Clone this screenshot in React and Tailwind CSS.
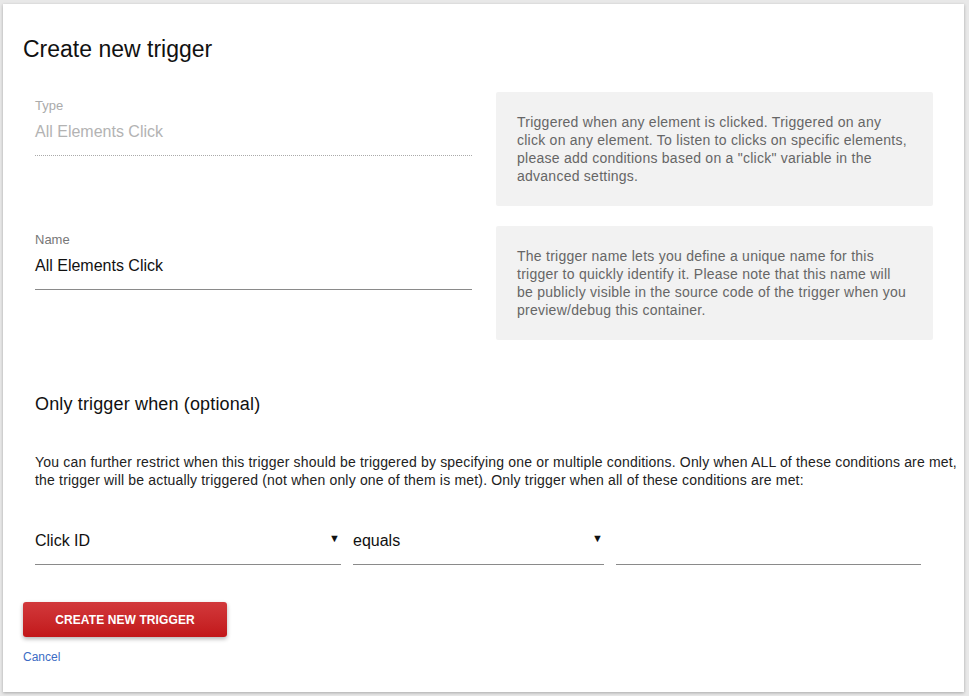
export default function App() {
  const font = { fontFamily: '"Liberation Sans", Arial, sans-serif' };
  return (
    <div className="min-h-screen w-full bg-[#e8e8e8] pt-[4px] pl-[3px]" style={font}>
      <div className="w-[961px] h-[688px] bg-white shadow-[0_1px_3px_rgba(0,0,0,0.28)] pt-[31px] pl-[20px]">
        <h1 className="text-[23px] leading-[28px] text-[#111]">Create new trigger</h1>

        <div className="ml-[12px] w-[898px] mt-[29px] flex flex-col gap-[20px]">
          <div className="grid grid-cols-[437px_437px] gap-[24px]">
            <div className="pt-[6px]">
              <div className="text-[13px] leading-[16px] text-[#ababab]">Type</div>
              <div className="mt-[8px] text-[16px] leading-[20px] text-[#b3b3b3]">All Elements Click</div>
              <div className="mt-[13px] border-b border-dotted border-[#aaaaaa]"></div>
            </div>
            <div className="bg-[#f2f2f2] rounded-[2px] px-[21px] py-[21px] text-[14px] leading-[18px] tracking-[0.25px] text-[#666] h-[114px] whitespace-nowrap">
              Triggered when any element is clicked. Triggered on any<br />
              click on any element. To listen to clicks on specific elements,<br />
              please add conditions based on a "click" variable in the<br />
              advanced settings.
            </div>
          </div>

          <div className="grid grid-cols-[437px_437px] gap-[24px]">
            <div className="pt-[6px]">
              <div className="text-[13px] leading-[16px] text-[#777]">Name</div>
              <div className="mt-[8px] text-[16px] leading-[20px] text-[#111]">All Elements Click</div>
              <div className="mt-[13px] border-b border-[#8a8a8a]"></div>
            </div>
            <div className="bg-[#f2f2f2] rounded-[2px] px-[21px] py-[21px] text-[14px] leading-[18px] tracking-[0.25px] text-[#666] h-[114px] whitespace-nowrap">
              The trigger name lets you define a unique name for this<br />
              trigger to quickly identify it. Please note that this name will<br />
              be publicly visible in the source code of the trigger when you<br />
              preview/debug this container.
            </div>
          </div>
        </div>

        <div className="ml-[12px]">
          <h2 className="mt-[53px] text-[18px] leading-[22px] tracking-[0.15px] text-[#111]">Only trigger when (optional)</h2>
          <p className="mt-[38px] text-[14px] leading-[18px] tracking-[0.18px] text-[#222] whitespace-nowrap">
            You can further restrict when this trigger should be triggered by specifying one or multiple conditions. Only when ALL of these conditions are met,<br />
            the trigger will be actually triggered (not when only one of them is met). Only trigger when all of these conditions are met:
          </p>

          <div className="mt-[42px] flex gap-[12px]">
            <div className="w-[306px] border-b border-[#8a8a8a] pb-[13px] flex items-start justify-between">
              <span className="text-[16px] leading-[20px] text-[#111]">Click ID</span>
              <span className="text-[11px] leading-[14px] text-[#111] mr-[1px]">▼</span>
            </div>
            <div className="w-[251px] border-b border-[#8a8a8a] pb-[13px] flex items-start justify-between">
              <span className="text-[16px] leading-[20px] text-[#111]">equals</span>
              <span className="text-[11px] leading-[14px] text-[#111] mr-[1px]">▼</span>
            </div>
            <div className="w-[305px] border-b border-[#8a8a8a] pb-[13px] h-[34px]"></div>
          </div>
        </div>

        <button className="mt-[37px] w-[204px] h-[35px] rounded-[3px] bg-gradient-to-b from-[#d2383b] to-[#c21619] text-white text-[12px] font-bold tracking-[0.1px] shadow-[0_2px_4px_rgba(0,0,0,0.3)]">
          CREATE NEW TRIGGER
        </button>
        <div className="mt-[13px] text-[12px] leading-[14px] text-[#3b6cc4]">Cancel</div>
      </div>
    </div>
  );
}
